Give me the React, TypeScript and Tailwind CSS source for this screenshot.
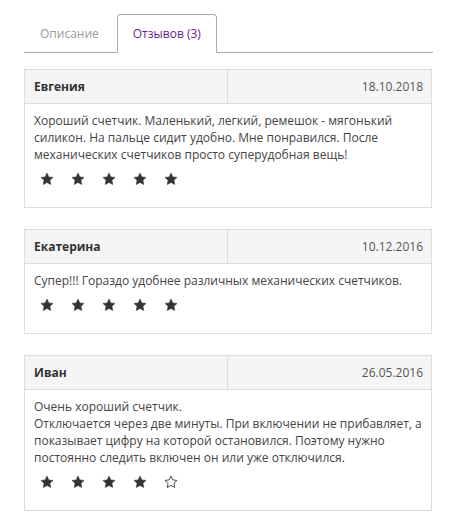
import React from "react";

interface Review {
  id: number;
  author: string;
  date: string;
  text: string[];
  rating: number;
}

const reviews: Review[] = [
  {
    id: 1,
    author: "Евгения",
    date: "18.10.2018",
    text: [
      "Хороший счетчик. Маленький, легкий, ремешок - мягонький силикон. На пальце сидит удобно. Мне понравился. После механических счетчиков просто суперудобная вещь!",
    ],
    rating: 5,
  },
  {
    id: 2,
    author: "Екатерина",
    date: "10.12.2016",
    text: ["Супер!!! Гораздо удобнее различных механических счетчиков."],
    rating: 5,
  },
  {
    id: 3,
    author: "Иван",
    date: "26.05.2016",
    text: [
      "Очень хороший счетчик.",
      "Отключается через две минуты. При включении не прибавляет, а показывает цифру на которой остановился. Поэтому нужно постоянно следить включен он или уже отключился.",
    ],
    rating: 4,
  },
];

function Star({ filled }: { filled: boolean }) {
  return (
    <svg width="14" height="14" viewBox="0 0 24 24" className="block">
      <path
        d="M12 1.8l3.1 6.6 7.2.9-5.3 5 1.4 7.1L12 17.9l-6.4 3.5L7 14.3l-5.3-5 7.2-.9z"
        fill={filled ? "#333" : "none"}
        stroke="#333"
        strokeWidth={filled ? 1 : 1.5}
        strokeLinejoin="round"
      />
    </svg>
  );
}

function ReviewCard({ review }: { review: Review }) {
  return (
    <div className="border border-[#dddddd]">
      <div className="flex bg-[#f5f5f5] border-b border-[#dddddd]">
        <div className="w-[203px] border-r border-[#dddddd] px-[9px] py-[8px] font-bold text-[#333]">
          {review.author}
        </div>
        <div className="flex-1 px-[8px] py-[8px] text-right text-[#555]">{review.date}</div>
      </div>
      <div className="px-[9px] pt-[8px] pb-[21px] text-[#444]">
        {review.text.map((line, i) => (
          <p key={i}>{line}</p>
        ))}
        <div className="mt-[9px] flex h-[14px] items-center gap-[17px] pl-[6px]">
          {[1, 2, 3, 4, 5].map((n) => (
            <Star key={n} filled={n <= review.rating} />
          ))}
        </div>
      </div>
    </div>
  );
}

export default function App() {
  return (
    <div
      className="bg-white px-6 pt-[14px] text-[12px] leading-[17px]"
      style={{ fontFamily: '"Open Sans", Arial, sans-serif' }}
    >
      <div className="flex border-b border-[#aaaaaa]">
        <div className="-mb-px mr-[2px] border border-transparent px-[15px] py-[10px] text-[#999]">
          Описание
        </div>
        <div className="-mb-px rounded-t-[4px] border border-[#aaaaaa] border-b-white bg-white px-[15px] py-[10px] text-[#6d1a8c]">
          Отзывов (3)
        </div>
      </div>

      <div className="mt-[16px] flex flex-col gap-[21px] pr-px">
        {reviews.map((r) => (
          <ReviewCard key={r.id} review={r} />
        ))}
      </div>
    </div>
  );
}
